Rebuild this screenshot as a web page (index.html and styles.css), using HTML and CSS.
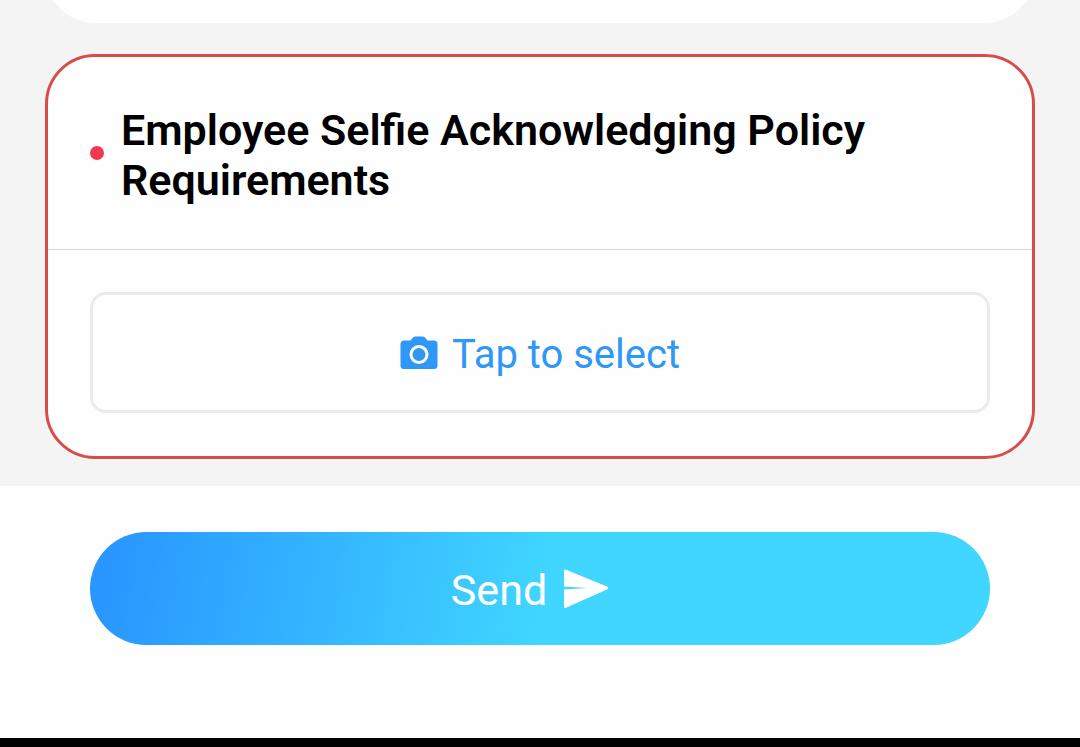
FILE: index.html
```html
<!DOCTYPE html>
<html lang="en">
<head>
<meta charset="utf-8">
<meta name="viewport" content="width=device-width, initial-scale=1">
<title>Policy form</title>
<link rel="stylesheet" href="styles.css">
</head>
<body>
<main class="form">
  <div class="previous-card"></div>
  <section class="card" aria-labelledby="selfie-title">
    <header class="card-header">
      <span class="required-dot"></span>
      <h2 class="card-title" id="selfie-title">Employee Selfie Acknowledging Policy Requirements</h2>
    </header>
    <div class="card-body">
      <button class="select-button" type="button">
        <svg class="camera-icon" viewBox="0 0 38 34" aria-hidden="true">
          <path fill="currentColor" d="M4 4.500H10.500L13 1.500Q14 .500 15.500 .500H22.500Q24 .500 25 1.500L27.500 4.500H34Q37.500 4.500 37.500 8V29.500Q37.500 33 34 33H4Q.500 33 .500 29.500V8Q.500 4.500 4 4.500Z"/>
          <circle cx="19" cy="18.500" r="8" fill="none" stroke="#fff" stroke-width="3"/>
        </svg>
        <span class="button-label">Tap to select</span>
      </button>
    </div>
  </section>
</main>
<footer class="actions">
  <button class="send-button" type="submit">
    <span class="button-label">Send</span>
    <svg class="send-icon" viewBox="0 0 46 40" aria-hidden="true">
      <path fill="currentColor" d="M1 2Q1 0 3 .800L44 17.500Q46.500 19 44 20.500L3 38.800Q1 39.500 1 37.500V20.500L24 19L1 17.500Z"/>
    </svg>
  </button>
</footer>
<div class="system-bar"></div>
</body>
</html>
```
FILE: styles.css
```css
* {
  box-sizing: border-box;
}

body {
  display: flex;
  flex-direction: column;
  min-height: 100vh;
  margin: 0;
  background: #fefefe;
  font-family: Roboto, "Liberation Sans", sans-serif;
}

.form {
  padding: 0 45px 27px;
  overflow: hidden;
  background: #f4f4f4;
}

.previous-card {
  height: 100px;
  margin-top: -77px;
  border-radius: 50px;
  background: #fefefe;
}

.card {
  margin-top: 31px;
  border: 3px solid #d64c4c;
  border-radius: 50px;
  background: #fefefe;
}

.card-header {
  display: flex;
  align-items: center;
  gap: 17px;
  padding: 44px 42px;
  border-bottom: 1px solid #d4d4d4;
}

.required-dot {
  flex: none;
  width: 14px;
  height: 14px;
  border-radius: 50%;
  background: #f0384f;
}

.card-title {
  margin: 0;
  padding-top: 4px;
  color: #000;
  font-size: 43px;
  font-weight: 600;
  line-height: 50px;
}

.card-body {
  padding: 42px 42px 43px;
}

.select-button {
  display: flex;
  align-items: center;
  justify-content: center;
  gap: 14px;
  width: 100%;
  padding: 32px 24px;
  border: 3px solid #ebebeb;
  border-radius: 16px;
  background: #fefefe;
  color: #2e97f7;
  font: 400 40px/47px Roboto, "Liberation Sans", sans-serif;
}

.button-label {
  padding-top: 4px;
}

.camera-icon {
  width: 38px;
  height: 34px;
}

.actions {
  flex: 1;
  padding: 46px 90px;
}

.send-button {
  display: flex;
  align-items: center;
  justify-content: center;
  gap: 16px;
  width: 100%;
  padding: 30px 44px 30px 24px;
  border: 0;
  border-radius: 57px;
  background: linear-gradient(100deg, #2997ff 3%, #40d6ff 51%);
  color: #fff;
  font: 400 43px/49px Roboto, "Liberation Sans", sans-serif;
}

.send-icon {
  width: 46px;
  height: 40px;
}

.system-bar {
  height: 9px;
  background: #000;
}
```
